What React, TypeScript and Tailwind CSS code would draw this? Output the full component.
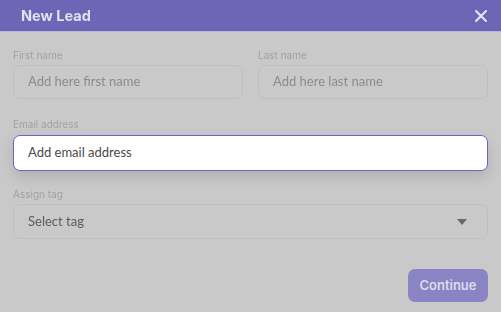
import { FiX } from "react-icons/fi";

const font = { fontFamily: "Inter, 'Noto Sans', sans-serif" };
const body = "font-['Lato',_sans-serif]";

export default function App() {
  return (
    <div className="h-[312px] w-[501px] overflow-hidden bg-[#c9c9c9]" style={font}>
      <div className="flex h-[32px] items-center justify-between border-b border-[#b9b6d6] bg-[#6c66b6] pl-[21px] pr-[10px] blur-[0.5px]">
        <h1 className="text-[14.5px] font-bold text-[#e2e1ee]">New Lead</h1>
        <FiX className="text-[20px] text-[#e6e5f0]" strokeWidth={2.5} />
      </div>

      <div className="px-[13px] pt-[16px]">
        <div className="grid grid-cols-2 gap-[15px] blur-[0.5px]">
          {[
            { label: "First name", placeholder: "Add here first name" },
            { label: "Last name", placeholder: "Add here last name" },
          ].map((f) => (
            <div key={f.label}>
              <p className="text-[10px] leading-[14px] text-[#a2a2a2]">{f.label}</p>
              <div className={`mt-[3px] flex h-[34px] items-center rounded-[7px] border border-[#bebec4] px-[14px] text-[13px] text-[#8c8c8c] ${body}`}>
                {f.placeholder}
              </div>
            </div>
          ))}
        </div>

        <p className="mt-[18px] text-[10px] leading-[14px] text-[#a2a2a2] blur-[0.5px]">
          Email address
        </p>
        <div className="relative mt-[4px] flex h-[36px] items-center rounded-[7px] border border-[#6c63c9] bg-white px-[14px] text-[13px] text-[#4a4a4a] shadow-[0_6px_14px_rgba(0,0,0,0.12)] font-['Lato',_sans-serif]">
          Add email address
        </div>

        <div className="blur-[0.5px]">
          <p className="mt-[16px] text-[10px] leading-[14px] text-[#a2a2a2]">Assign tag</p>
          <div className="mt-[3px] flex h-[35px] items-center justify-between rounded-[7px] border border-[#bebec4] pl-[14px] pr-[20px] text-[13px] text-[#5c5c5c] font-['Lato',_sans-serif]">
            <span>Select tag</span>
            <svg width="10" height="6" viewBox="0 0 10 6">
              <path d="M0 0h10L5 6z" fill="#6a6a6a" />
            </svg>
          </div>

          <div className="mt-[30px] flex justify-end">
            <button className="h-[33px] w-[80px] rounded-[7px] bg-[#8a84c4] text-[13px] font-semibold text-[#dcdaec]">
              Continue
            </button>
          </div>
        </div>
      </div>
    </div>
  );
}
